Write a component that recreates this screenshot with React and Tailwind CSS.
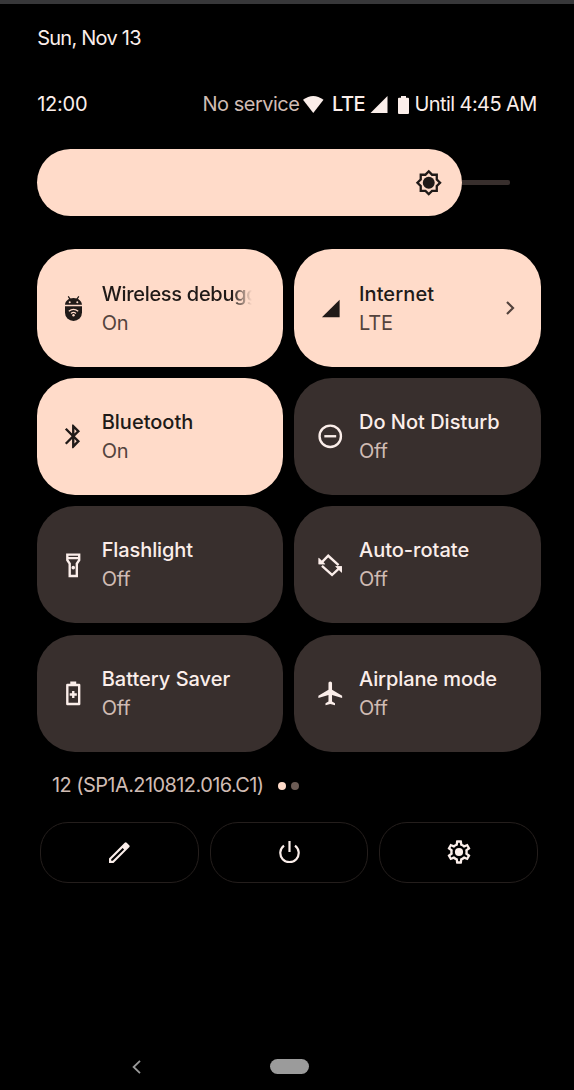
import React from "react";

function Icon({ children, className = "size-[28.5px]", box = "0 0 24 24" }) {
  return (
    <svg viewBox={box} className={`shrink-0 ${className}`} fill="currentColor">
      {children}
    </svg>
  );
}

const stroke = { fill: "none", stroke: "currentColor", strokeWidth: 2 };

const DebugIcon = () => (
  <Icon className="h-[25px] w-[17px]" box="0 0 17 25">
    <path d="M3.2.3 5.4 3.6M13.8.3 11.6 3.6" {...stroke} strokeWidth="1.2" />
    <path
      fillRule="evenodd"
      d="M0 8.8C.2 4.9 3.8 2 8.5 2S16.8 4.9 17 8.8ZM4.7 5.2a1 1 0 1 0 0 2 1 1 0 0 0 0-2Zm7.6 0a1 1 0 1 0 0 2 1 1 0 0 0 0-2Z"
    />
    <path d="M0 10.2H17V16.5A8.5 8.5 0 0 1 0 16.5Z" />
    <g fill="none" stroke="#ffdbc9" strokeWidth="1.3">
      <path d="M3.8 15.2Q8.5 11.4 13.2 15.2M6 17.4Q8.5 15.5 11 17.4" />
    </g>
    <circle cx="8.5" cy="19.2" r="1.2" fill="#ffdbc9" />
  </Icon>
);
const SignalIcon = () => (
  <Icon>
    <path d="M5 19.6 19.9 4.8V19.6Z" />
  </Icon>
);
const BluetoothIcon = () => (
  <Icon>
    <path d="M17.71 7.71L12 2h-1v7.59L6.41 5 5 6.41 10.59 12 5 17.59 6.41 19 11 14.41V22h1l5.71-5.71-4.3-4.29 4.3-4.29zM13 5.83l1.88 1.88L13 9.59V5.83zm1.88 10.46L13 18.17v-3.76l1.88 1.88z" />
  </Icon>
);
const DndIcon = () => (
  <Icon>
    <circle cx="12" cy="12" r="9" {...stroke} />
    <path d="M7 12H17" {...stroke} />
  </Icon>
);
const FlashlightIcon = () => (
  <Icon>
    <path
      fillRule="evenodd"
      d="M6 2v6l2 3v11h8V11l2-3V2ZM16 4v1H8V4ZM14 10.4V20h-4v-9.6L8 7.4V7h8v.4Z"
    />
    <circle cx="12" cy="14" r="1.5" />
  </Icon>
);
const RotateIcon = () => (
  <Icon>
    <path d="M4.8 9.6 10.3 4 19 11.8M5 12.6 13.5 20.2 19.2 14.8" {...stroke} />
    <path d="M2.2 5.7V11.2H7.8ZM21.8 18.3V12.8H16.2Z" transform="translate(0 0)" />
    <path d="M2.2 11.2V5.700L7.800 11.200ZM21.800 12.800V18.300L16.200 12.800Z" />
  </Icon>
);
const BatteryIcon = () => (
  <Icon>
    <path
      fillRule="evenodd"
      d="M9.5 2h5v2H17a1 1 0 0 1 1 1V21a1 1 0 0 1-1 1H7a1 1 0 0 1-1-1V5a1 1 0 0 1 1-1H9.500ZM8 6V20H16V6Z"
    />
    <path d="M12 10V16M9 13H15" {...stroke} />
  </Icon>
);
const PlaneIcon = () => (
  <Icon>
    <path d="M22 16v-2l-8.500-5V3.500c0-.83-.67-1.500-1.500-1.500s-1.500.67-1.500 1.500V9L2 14v2l8.500-2.500V19L8 20.500V22l4-1 4 1v-1.500L13.500 19v-5.500L22 16z" />
  </Icon>
);

const tiles = [
  { label: "Wireless debugging", state: "On", icon: DebugIcon, on: true, fade: true, track: "tracking-[-0.3px]" },
  { label: "Internet", state: "LTE", icon: SignalIcon, on: true, chevron: true, track: "tracking-[0.1px]" },
  { label: "Bluetooth", state: "On", icon: BluetoothIcon, on: true, track: "tracking-[0px]" },
  { label: "Do Not Disturb", state: "Off", icon: DndIcon, track: "tracking-[0px]" },
  { label: "Flashlight", state: "Off", icon: FlashlightIcon, track: "tracking-[-0.1px]" },
  { label: "Auto-rotate", state: "Off", icon: RotateIcon, track: "tracking-[0px]" },
  { label: "Battery Saver", state: "Off", icon: BatteryIcon, track: "tracking-[0px]" },
  { label: "Airplane mode", state: "Off", icon: PlaneIcon, track: "tracking-[-0.1px]" },
];

function Tile({ tile }) {
  const Glyph = tile.icon;
  return (
    <div
      className={`flex h-[117.3px] items-center rounded-[38px] pr-[26px] pl-[21.8px] ${
        tile.on ? "bg-[#ffdbc9] text-[#201a18]" : "bg-[#382f2d] text-[#fbeeea]"
      }`}
    >
      <div className="flex w-[28.5px] shrink-0 justify-center">
        <Glyph />
      </div>
      <div className={`ml-[14.2px] shrink-0 pt-[1.2px] ${tile.chevron ? "w-[130px]" : "w-[150px]"}`}>
        <div
          className={`overflow-hidden text-[20px] leading-[29px] font-medium whitespace-nowrap ${tile.track} ${
            tile.fade ? "[mask-image:linear-gradient(to_right,black_130px,transparent_150px)]" : ""
          }`}
        >
          {tile.label}
        </div>
        <div
          className={`text-[20px] leading-[29px] font-[380] tracking-[-0.15px] ${
            tile.on ? "text-[#53433d]" : "text-[#d0bcb4]"
          }`}
        >
          {tile.state}
        </div>
      </div>
      {tile.chevron && (
        <Icon className="ml-auto h-[14px] w-[9px] text-[#53433d]" box="0 0 9 14">
          <path d="M1 1 7 7 1 13" {...stroke} strokeWidth="2.2" />
        </Icon>
      )}
    </div>
  );
}

const PencilIcon = () => (
  <Icon className="size-[21px]" box="0 0 21 21">
    <path
      fillRule="evenodd"
      d="M0 21V16.500L15.700.8Q16.700-.2 17.700.8L20.200 3.300Q21.200 4.300 20.200 5.300L4.500 21ZM2.200 18.800H3.700L15.100 7.400 13.600 5.900 2.200 17.300Z"
    />
  </Icon>
);
const PowerIcon = () => (
  <Icon className="h-[22px] w-[21px]" box="0 0 21 22">
    <path d="M10.500 0V11M5 4.600A9.200 9.200 0 1 0 16 4.600" {...stroke} strokeWidth="2.200" />
  </Icon>
);
const GearIcon = () => (
  <Icon className="size-[28px]">
    <path d="M19.43 12.98c.04-.32.07-.64.07-.98s-.03-.66-.07-.98l2.11-1.65c.19-.15.24-.42.12-.64l-2-3.46c-.09-.16-.26-.25-.44-.25-.06 0-.12.01-.17.03l-2.49 1c-.52-.4-1.08-.73-1.69-.98l-.38-2.65C14.46 2.18 14.25 2 14 2h-4c-.25 0-.46.18-.49.42l-.38 2.65c-.61.25-1.17.59-1.69.98l-2.49-1c-.06-.02-.12-.03-.18-.03-.17 0-.34.09-.43.25l-2 3.46c-.13.22-.07.49.12.64l2.11 1.65c-.04.32-.07.65-.07.98s.03.66.07.98l-2.11 1.65c-.19.15-.24.42-.12.64l2 3.46c.09.16.26.25.44.25.06 0 .12-.01.17-.03l2.49-1c.52.4 1.08.73 1.69.98l.38 2.65c.03.24.24.42.49.42h4c.25 0 .46-.18.49-.42l.38-2.65c.61-.25 1.17-.59 1.69-.98l2.49 1c.06.02.12.03.18.03.17 0 .34-.09.43-.25l2-3.46c.12-.22.07-.49-.12-.64l-2.11-1.65zm-1.98-1.71c.04.31.05.52.05.73 0 .21-.02.43-.05.73l-.14 1.13.89.7 1.08.84-.7 1.21-1.27-.51-1.04-.42-.9.68c-.43.32-.84.56-1.25.73l-1.06.43-.16 1.13-.2 1.35h-1.4l-.19-1.35-.16-1.13-1.06-.43c-.43-.18-.83-.41-1.23-.71l-.91-.7-1.06.43-1.27.51-.7-1.21 1.08-.84.89-.7-.14-1.13c-.03-.31-.05-.54-.05-.74s.02-.43.05-.73l.14-1.13-.89-.7-1.08-.84.7-1.21 1.27.51 1.04.42.9-.68c.43-.32.84-.56 1.25-.73l1.06-.43.16-1.13.2-1.35h1.39l.19 1.35.16 1.13 1.06.43c.43.18.83.41 1.23.71l.91.7 1.06-.43 1.27-.51.7 1.21-1.07.85-.89.7.14 1.13z" />
    <circle cx="12" cy="12" r="3.500" />
  </Icon>
);

const actions = [PencilIcon, PowerIcon, GearIcon];

export default function App() {
  return (
    <div className="flex h-[1090px] w-[574px] flex-col overflow-hidden border-t-4 border-[#373739] bg-black pl-[37.2px] font-['Inter','Liberation_Sans',sans-serif] text-[20px] text-[#fbeeea]">
      <div className="mt-[19.5px] h-[29px] leading-[29px] tracking-[-0.75px]">Sun, Nov 13</div>

      <div className="mt-[37.7px] flex h-[29px] items-center leading-[29px] whitespace-nowrap">
        <div className="w-[165.3px] tracking-[-0.25px]">12:00</div>
        <div className="w-[101px] tracking-[-0.5px] text-[#d0bcb4]">No service</div>
        <Icon className="h-[17px] w-[20.5px]" box="0 0 20.500 17">
          <path d="M0 3.800Q10.250-3.800 20.500 3.800L10.250 17Z" />
        </Icon>
        <div className="ml-[8px] w-[38.500px] font-medium tracking-[-0.5px]">LTE</div>
        <Icon className="size-[17.5px]" box="0 0 17.500 17.500">
          <path d="M0 17.500 17.500 0V17.500Z" />
        </Icon>
        <Icon className="ml-[10px] h-[18px] w-[11px]" box="0 0 11 18">
          <path d="M3 0H8V1.800H10Q11 1.800 11 2.800V17Q11 18 10 18H1Q0 18 0 17V2.800Q0 1.800 1 1.800H3Z" />
        </Icon>
        <div className="ml-[5.5px] tracking-[-0.58px]">Until 4:45 AM</div>
      </div>

      <div className="mt-[29.8px] flex h-[67px] items-center">
        <div className="flex h-[67px] w-[424.8px] items-center justify-end rounded-full bg-[#ffdbc9] pr-[19.3px] text-[#201a18]">
          <Icon className="size-[27.500px]">
            <path d="M20 8.690V4h-4.690L12 .69 8.690 4H4v4.690L.69 12 4 15.310V20h4.690L12 23.310 15.310 20H20v-4.690L23.310 12 20 8.690zm-2 5.790V18h-3.520L12 20.480 9.520 18H6v-3.520L3.520 12 6 9.520V6h3.520L12 3.520 14.480 6H18v3.520L20.480 12 18 14.480z" />
            <circle cx="12" cy="12" r="5.200" />
          </Icon>
        </div>
        <div className="h-[5px] w-[48px] rounded-r-[2px] bg-[#382f2d]" />
      </div>

      <div className="mt-[33.4px] grid w-[503.500px] grid-cols-2 gap-x-[11.1px] gap-y-[11.1px]">
        {tiles.map((tile) => (
          <Tile key={tile.label} tile={tile} />
        ))}
      </div>

      <div className="mt-[19.300px] ml-[14.8px] flex h-[29px] items-center leading-[29px] text-[#d0bcb4]">
        <div className="w-[226px] tracking-[-0.580px] whitespace-nowrap">12 (SP1A.210812.016.C1)</div>
        <div className="size-[8px] rounded-full bg-[#ffdbc9]" />
        <div className="ml-[5.5px] size-[8px] rounded-full bg-[#6c5c55]" />
      </div>

      <div className="mt-[21.8px] ml-[3px] flex gap-[10.700px]">
        {actions.map((Glyph, i) => (
          <div
            key={i}
            className="flex h-[61px] w-[158.8px] items-center justify-center rounded-[28px] border border-[#241e1c]"
          >
            <Glyph />
          </div>
        ))}
      </div>

      <div className="mt-auto mb-[16px] ml-[94.5px] flex h-[15px] items-center">
        <Icon className="h-[14px] w-[9px] text-[#9a9a9a]" box="0 0 9 14">
          <path d="M8 .8 1.600 7 8 13.200" {...stroke} strokeWidth="1.800" />
        </Icon>
        <div className="ml-[129px] h-[14.5px] w-[39.5px] rounded-full bg-[#9b9b9b]" />
      </div>
    </div>
  );
}
